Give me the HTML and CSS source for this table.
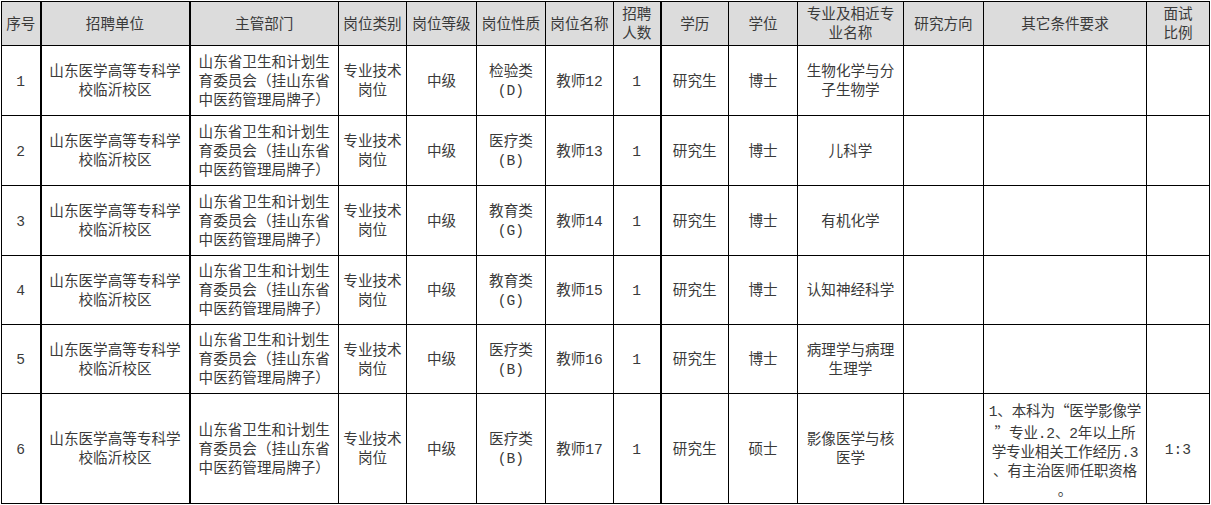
FILE: index.html
```html
<!DOCTYPE html>
<html lang="zh-CN">
<head>
<meta charset="utf-8">
<title>招聘岗位表</title>
<link rel="stylesheet" href="styles.css">
</head>
<body>
<table class="grid">
  <colgroup>
    <col class="c1"><col class="c2"><col class="c3"><col class="c4"><col class="c5"><col class="c6"><col class="c7"><col class="c8"><col class="c9"><col class="c10"><col class="c11"><col class="c12"><col class="c13"><col class="c14">
  </colgroup>
  <thead>
    <tr class="head">
      <th>序号</th><th>招聘单位</th><th>主管部门</th><th>岗位类别</th><th>岗位等级</th><th>岗位性质</th><th>岗位名称</th><th>招聘<br>人数</th><th>学历</th><th>学位</th><th>专业及相近专<br>业名称</th><th>研究方向</th><th>其它条件要求</th><th>面试<br>比例</th>
    </tr>
  </thead>
  <tbody>
    <tr class="r70">
      <td>1</td><td>山东医学高等专科学<br>校临沂校区</td><td>山东省卫生和计划生<br>育委员会（挂山东省<br>中医药管理局牌子）</td><td>专业技术<br>岗位</td><td>中级</td><td>检验类<br>(D)</td><td>教师12</td><td>1</td><td>研究生</td><td>博士</td><td>生物化学与分<br>子生物学</td><td></td><td></td><td></td>
    </tr>
    <tr class="r70">
      <td>2</td><td>山东医学高等专科学<br>校临沂校区</td><td>山东省卫生和计划生<br>育委员会（挂山东省<br>中医药管理局牌子）</td><td>专业技术<br>岗位</td><td>中级</td><td>医疗类<br>(B)</td><td>教师13</td><td>1</td><td>研究生</td><td>博士</td><td>儿科学</td><td></td><td></td><td></td>
    </tr>
    <tr class="r70">
      <td>3</td><td>山东医学高等专科学<br>校临沂校区</td><td>山东省卫生和计划生<br>育委员会（挂山东省<br>中医药管理局牌子）</td><td>专业技术<br>岗位</td><td>中级</td><td>教育类<br>(G)</td><td>教师14</td><td>1</td><td>研究生</td><td>博士</td><td>有机化学</td><td></td><td></td><td></td>
    </tr>
    <tr class="r69">
      <td>4</td><td>山东医学高等专科学<br>校临沂校区</td><td>山东省卫生和计划生<br>育委员会（挂山东省<br>中医药管理局牌子）</td><td>专业技术<br>岗位</td><td>中级</td><td>教育类<br>(G)</td><td>教师15</td><td>1</td><td>研究生</td><td>博士</td><td>认知神经科学</td><td></td><td></td><td></td>
    </tr>
    <tr class="r69">
      <td>5</td><td>山东医学高等专科学<br>校临沂校区</td><td>山东省卫生和计划生<br>育委员会（挂山东省<br>中医药管理局牌子）</td><td>专业技术<br>岗位</td><td>中级</td><td>医疗类<br>(B)</td><td>教师16</td><td>1</td><td>研究生</td><td>博士</td><td>病理学与病理<br>生理学</td><td></td><td></td><td></td>
    </tr>
    <tr class="r110">
      <td>6</td><td>山东医学高等专科学<br>校临沂校区</td><td>山东省卫生和计划生<br>育委员会（挂山东省<br>中医药管理局牌子）</td><td>专业技术<br>岗位</td><td>中级</td><td>医疗类<br>(B)</td><td>教师17</td><td>1</td><td>研究生</td><td>硕士</td><td>影像医学与核<br>医学</td><td></td><td class="cond">1、本科为<span class="q">“</span>医学影像学<br><span class="q">”</span>专业.2、2年以上所<br>学专业相关工作经历.3<br>、有主治医师任职资格<br>。</td><td>1:3</td>
    </tr>
  </tbody>
</table>
</body>
</html>
```
FILE: styles.css
```css
html, body {
  margin: 0;
  padding: 0;
  background: #ffffff;
}

.grid {
  margin: 1px 0 0 1px;
  width: 1208px;
  table-layout: fixed;
  border-collapse: collapse;
  font-family: "Liberation Mono", "Noto Sans CJK SC", monospace;
  font-size: 14.6px;
  line-height: 19px;
  color: #3a3a3a;
}

.c1 { width: 39px; }
.c2 { width: 149px; }
.c3 { width: 149px; }
.c4 { width: 68px; }
.c5 { width: 70px; }
.c6 { width: 69px; }
.c7 { width: 68px; }
.c8 { width: 47px; }
.c9 { width: 68px; }
.c10 { width: 69px; }
.c11 { width: 106px; }
.c12 { width: 80px; }
.c13 { width: 163px; }
.c14 { width: 63px; }

.grid th,
.grid td {
  border: 1px solid #000;
  padding: 3px 0 0;
  text-align: center;
  vertical-align: middle;
  white-space: nowrap;
  overflow: hidden;
  font-weight: 400;
}

.grid th {
  background: #dcdcdc;
}

.grid tr > :nth-child(1),
.grid tr > :nth-child(2),
.grid tr > :nth-child(8) {
  border-right-width: 2px;
}

.head { height: 44px; }
.r70 { height: 70px; }
.r69 { height: 69px; }
.r110 { height: 110px; }

.cond {
  letter-spacing: -0.2px;
}

.q {
  font-family: "Noto Sans CJK SC", sans-serif;
}
```
